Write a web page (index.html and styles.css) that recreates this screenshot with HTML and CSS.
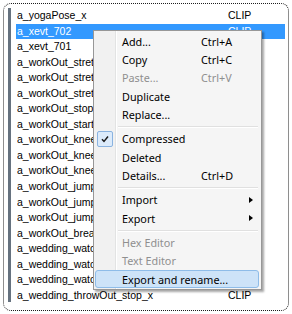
FILE: index.html
```html
<!DOCTYPE html>
<html lang="en">

<head>
    <meta charset="UTF-8">
    <title>Clip list</title>
    <link rel="stylesheet" href="styles.css">
</head>

<body>
    <div class="frame">
        <div class="list">
            <div class="row"><span class="name">a_yogaPose_x</span><span class="type">CLIP</span></div>
            <div class="row selected"><span class="name">a_xevt_702</span><span class="type">CLIP</span></div>
            <div class="row"><span class="name">a_xevt_701</span></div>
            <div class="row"><span class="name">a_workOut_stretch1</span></div>
            <div class="row"><span class="name">a_workOut_stretch2</span></div>
            <div class="row"><span class="name">a_workOut_stretch3</span></div>
            <div class="row"><span class="name">a_workOut_stop_x</span></div>
            <div class="row"><span class="name">a_workOut_start_x</span></div>
            <div class="row"><span class="name">a_workOut_knee1</span></div>
            <div class="row"><span class="name">a_workOut_knee2</span></div>
            <div class="row"><span class="name">a_workOut_knee3</span></div>
            <div class="row"><span class="name">a_workOut_jump1</span></div>
            <div class="row"><span class="name">a_workOut_jump2</span></div>
            <div class="row"><span class="name">a_workOut_jump3</span></div>
            <div class="row"><span class="name">a_workOut_breath</span></div>
            <div class="row"><span class="name">a_wedding_watch1</span></div>
            <div class="row"><span class="name">a_wedding_watch2</span></div>
            <div class="row"><span class="name">a_wedding_watch3</span></div>
            <div class="row"><span class="name">a_wedding_throwOut_stop_x</span><span class="type">CLIP</span></div>
        </div>

        <!-- context menu -->
        <div class="menu">
            <div class="item"><span class="icon"></span><span class="label">Add...</span><span class="key">Ctrl+A</span></div>
            <div class="item"><span class="icon"></span><span class="label">Copy</span><span class="key">Ctrl+C</span></div>
            <div class="item disabled"><span class="icon"></span><span class="label">Paste...</span><span class="key">Ctrl+V</span></div>
            <div class="item"><span class="icon"></span><span class="label">Duplicate</span></div>
            <div class="item"><span class="icon"></span><span class="label">Replace...</span></div>
            <div class="sep"></div>
            <div class="item">
                <span class="icon check">
                    <svg width="14" height="14" viewBox="0 0 14 14"><path d="M4 7.2 L6 9.4 L10 4.6" fill="none" stroke="#1b1b1b" stroke-width="1.5"/></svg>
                </span>
                <span class="label">Compressed</span>
            </div>
            <div class="item"><span class="icon"></span><span class="label">Deleted</span></div>
            <div class="item"><span class="icon"></span><span class="label">Details...</span><span class="key">Ctrl+D</span></div>
            <div class="sep"></div>
            <div class="item"><span class="icon"></span><span class="label">Import</span><span class="arrow"></span></div>
            <div class="item"><span class="icon"></span><span class="label">Export</span><span class="arrow"></span></div>
            <div class="sep"></div>
            <div class="item disabled"><span class="icon"></span><span class="label">Hex Editor</span></div>
            <div class="item disabled"><span class="icon"></span><span class="label">Text Editor</span></div>
            <div class="item active"><span class="icon"></span><span class="label wide">Export and rename...</span></div>
        </div>
    </div>
</body>

</html>
```

FILE: styles.css
```css
/* --- base --- */
* {
    box-sizing: border-box;
}

body {
    margin: 0;
    width: 292px;
    height: 314px;
    background: #ffffff;
    font-family: "Liberation Sans", Arial, sans-serif;
    color: #000000;
}

.frame {
    position: relative;
    margin: 3px;
    width: 286px;
    height: 308px;
    padding: 4px 0 0 4px;
    border: 1px dotted #1e1e1e;
    border-radius: 8px;
}

/* --- clip list --- */
.list {
    width: 277px;
    height: 294px;
    border-left: 3px solid #66727f;
    overflow: hidden;
}

.row {
    display: flex;
    height: 15.56px;
    line-height: 15.56px;
    margin-left: 5px;
    padding-left: 1px;
    font-size: 10.5px;
    white-space: nowrap;
}

.row .name {
    width: 211px;
    overflow: hidden;
}

.row.selected {
    background: #3399ff;
    color: #ffffff;
}

/* --- context menu --- */
.menu {
    position: absolute;
    left: 89px;
    top: 26px;
    width: 169px;
    padding: 1px 0;
    border: 1px solid #979797;
    background: linear-gradient(to right, #f1f1f1 0 21px, #e2e3e3 21px 22px, #ffffff 22px 23px, #f5f5f5 23px);
    box-shadow: 2px 2px 2px rgba(0, 0, 0, 0.35);
    font-family: "Noto Sans", "Open Sans", sans-serif;
    font-size: 10.8px;
}

.item {
    display: flex;
    align-items: center;
    height: 18.4px;
    margin: 0 2px 0 1px;
    padding-left: 1px;
    border: 1px solid transparent;
    border-radius: 3px;
    white-space: nowrap;
}

.item .icon {
    flex-shrink: 0;
    width: 16px;
    height: 16px;
    margin-right: 9px;
}

.item .label {
    width: 79px;
}

.item .label.wide {
    width: auto;
}

.item .arrow {
    margin-left: auto;
    margin-right: 5px;
    width: 0;
    height: 0;
    border-left: 4px solid #000000;
    border-top: 3.5px solid transparent;
    border-bottom: 3.5px solid transparent;
}

.item.disabled {
    color: #8f8f8f;
}

.item.active {
    background: #cde3f8;
    border-color: #8ebce8;
}

.check {
    display: flex;
    align-items: center;
    justify-content: center;
    background: #dcebfb;
    border: 1px solid #8ab3e0;
    border-radius: 2px;
}

.sep {
    display: flex;
    align-items: center;
    height: 5.8px;
    margin: 0 3px 0 24px;
}

.sep::before {
    content: '';
    flex: 1;
    height: 1px;
    background: #e0e0e0;
    box-shadow: 0 1px 0 #ffffff;
}
```
